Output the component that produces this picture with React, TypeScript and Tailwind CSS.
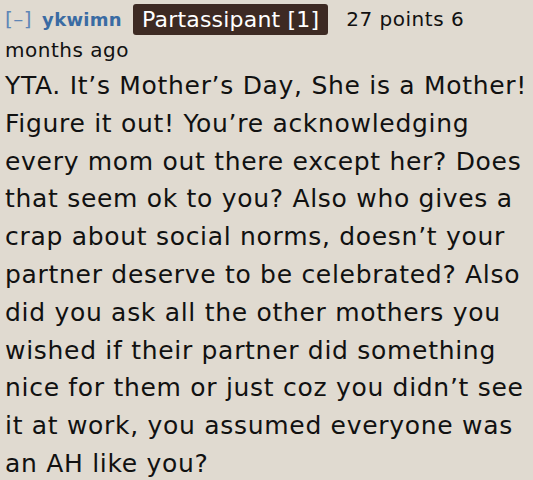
import React from 'react';

const body =
  'YTA. It\u2019s Mother\u2019s Day, She is a Mother! Figure it out! You\u2019re acknowledging every mom out there except her? Does that seem ok to you? Also who gives a crap about social norms, doesn\u2019t your partner deserve to be celebrated? Also did you ask all the other mothers you wished if their partner did something nice for them or just coz you didn\u2019t see it at work, you assumed everyone was an AH like you?';

export default function App() {
  return (
    <div className="w-[533px] h-[480px] overflow-hidden bg-[#e0dad0] px-[5px] pt-[4px] text-[#111] font-['DejaVu_Sans',Verdana,sans-serif]">
      {/* tagline */}
      <div className="text-[20px] leading-[30px] tracking-[0.5px]">
        <span className="text-[#5f86b6]">[&ndash;]</span>
        <span className="ml-[10px] text-[18px] font-bold tracking-[0.3px] text-[#3a6ba3]">ykwimn</span>
        <span className="ml-[11px] inline-block rounded-[3px] bg-[#3d2a23] px-[9px] text-[22px] leading-[31px] tracking-[0.2px] text-white align-[-1px]">
          Partassipant [1]
        </span>
        <span className="ml-[18px]">27 points 6 months ago</span>
      </div>
      {/* comment body */}
      <p className="mt-[2px] text-[25px] leading-[37.8px] tracking-[0.7px]">{body}</p>
    </div>
  );
}
